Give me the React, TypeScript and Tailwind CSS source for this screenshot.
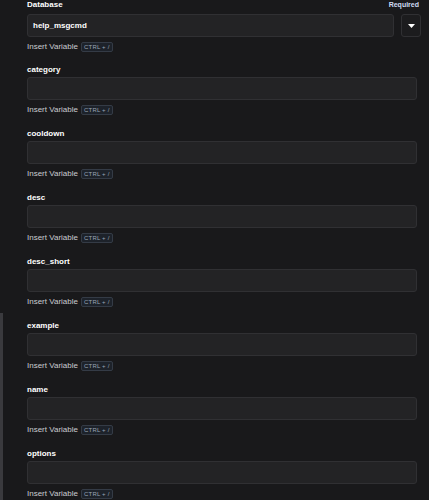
import React from "react";

const fields = ["category", "cooldown", "desc", "desc_short", "example", "name", "options"];

function InsertVar() {
  return (
    <div className="flex items-center gap-[3px] h-[12px] mt-[4px] text-[8px] leading-[12px] text-[#c9cbd0]">
      <span>Insert Variable</span>
      <span className="flex items-center h-[10px] px-[2px] rounded-[2px] border border-[#343b46] bg-[#1d222a] text-[6px] leading-[8px] text-[#9aa6b6] tracking-[0.2px]">
        CTRL + /
      </span>
    </div>
  );
}

export default function App() {
  return (
    <div
      className="relative w-[429px] h-[500px] bg-[#19191b] overflow-hidden"
      style={{ fontFamily: "'Liberation Sans', Arial, sans-serif" }}
    >
      <div className="absolute left-0 top-[313px] w-[3px] h-[187px] bg-[#3a3a3e]" />
      <div className="pl-[27px] pr-[8px] flex flex-col">
        <div className="flex flex-col">
          <div className="flex items-end justify-between h-[10px] pr-[2px]">
            <span className="text-[8px] leading-[10px] font-bold text-white">Database</span>
            <span className="text-[7px] leading-[10px] text-[#cfdcf4] font-bold">Required</span>
          </div>
          <div className="flex gap-[7px] mt-[4px]">
            <div className="flex-1 h-[23px] rounded-[3px] border border-[#303033] bg-[#232325] flex items-center px-[5px]">
              <span className="text-[8px] font-bold text-white">help_msgcmd</span>
            </div>
            <div className="w-[20px] h-[23px] rounded-[3px] border border-[#303033] bg-[#1c1c1e] flex items-center justify-center">
              <svg width="7" height="4" viewBox="0 0 7 4">
                <path d="M0 0 H7 L3.5 4 Z" fill="#ffffff" />
              </svg>
            </div>
          </div>
          <InsertVar />
        </div>
        {fields.map((f, i) => (
          <div key={f} className={i === 0 ? "flex flex-col mt-[12px]" : "flex flex-col mt-[13px]"}>
            <span className="text-[8px] leading-[10px] font-bold text-white">{f}</span>
            <div className="w-[390px] h-[23px] mt-[2px] rounded-[3px] border border-[#303033] bg-[#232325]" />
            <InsertVar />
          </div>
        ))}
      </div>
    </div>
  );
}
